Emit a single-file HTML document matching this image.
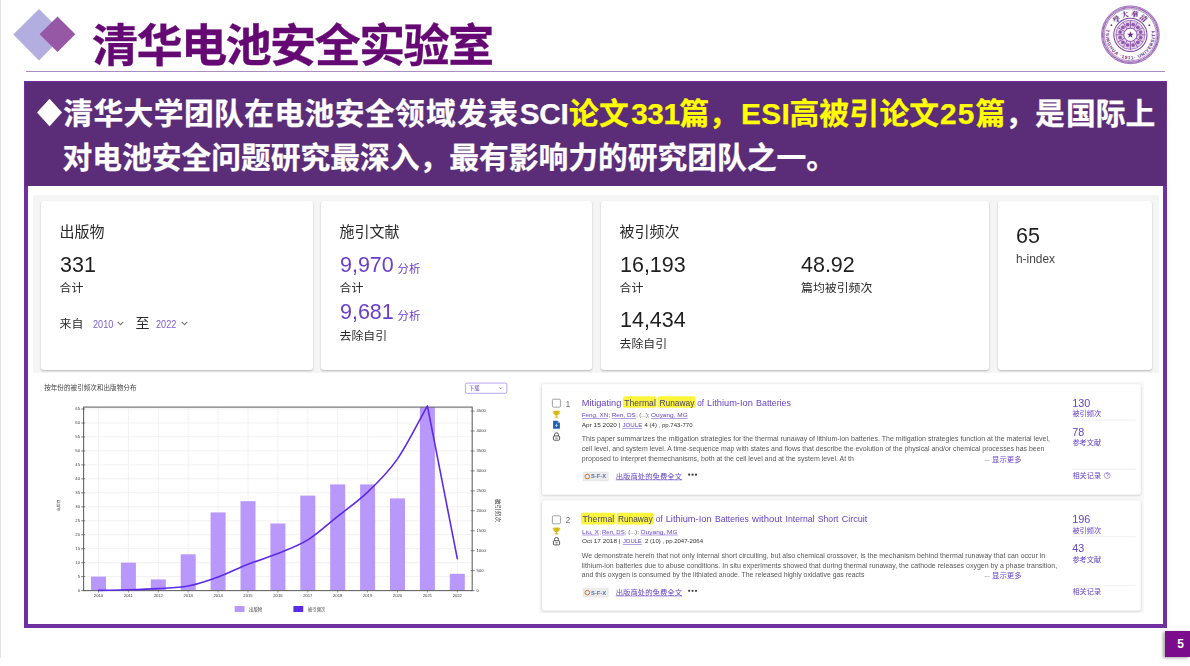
<!DOCTYPE html>
<html lang="zh">
<head>
<meta charset="utf-8">
<title>清华电池安全实验室</title>
<style>
*{box-sizing:border-box;margin:0;padding:0}
html,body{width:1190px;height:666px;overflow:hidden;background:#fff}
body{position:relative;font-family:"Liberation Sans","Noto Sans CJK SC",sans-serif;color:#222}
.abs{position:absolute;white-space:nowrap}
#edge{left:0;top:0;width:1.4px;height:657.6px;background:#e2e2e2}
#title{left:91.6px;top:14.5px;font-size:44.9px;font-weight:700;color:#660874;line-height:64px;letter-spacing:-1.7px;-webkit-text-stroke:0.3px #660874;transform:scaleX(1.03);transform-origin:0 0}
#rule{left:26px;top:70.5px;width:1139px;height:1.2px;background:#a98cc0}
#frame{left:24px;top:81px;width:1143px;height:547px;border:4px solid #7030a0;background:#fff}
#banner{left:25.3px;top:82.4px;width:1140.4px;height:103.6px;background:#5b2d78}
.bl{left:38px;font-size:29.75px;font-weight:700;color:#fff;line-height:44px;-webkit-text-stroke:0.25px}
.bl .y{color:#ffff00}
#bl1{top:92.2px;left:0}
#bl1 span{position:absolute;top:0}
#bl1 .dm{display:inline-block;transform-origin:0 50%;transform:scaleX(.91);font-size:27.6px;top:-0.7px}
#bl2{top:136px;left:62.6px}
#pageno{left:1165px;top:631.3px;width:25px;height:25.6px;padding-left:6px;background:#7b0c8c;color:#fff;font-weight:700;font-size:12px;line-height:26px;text-align:center;box-shadow:-2px 1px 3px rgba(0,0,0,.35)}
/* stats */
#stats{left:33px;top:195px;width:1126px;height:178px;background:#f5f5f5}
.card{position:absolute;background:#fff;border-radius:3px;box-shadow:0 1px 2px rgba(0,0,0,.26)}
.h{font-size:15px;color:#2a2a2a;line-height:18px}
.n{font-size:22.5px;color:#1f1f1f;line-height:24px;transform:scaleX(.955);transform-origin:0 0}
.s{font-size:11.9px;color:#2a2a2a;line-height:14px}
.p{color:#6b3fc8}
.h,.n,.s{filter:blur(.3px)}
</style>
</head>
<body>
<div id="edge" class="abs"></div>
<svg class="abs" style="left:12px;top:8px" width="66" height="54" viewBox="12 8 66 54">
<polygon points="13.3,34.5 39,9 64.5,34.5 39,60.5" fill="#b3aee0"/>
<polygon points="39.6,34.2 57.5,16.5 75.3,34.2 57.5,52" fill="#9657a5"/>
</svg>
<div id="title" class="abs">清华电池安全实验室</div>
<div id="rule" class="abs"></div>
<div id="frame" class="abs"></div>
<div id="banner" class="abs"></div>
<div id="bl1" class="abs bl"><span class="dm" style="left:37.2px;letter-spacing:0px">◆</span><span class="" style="left:63.3px;letter-spacing:0.41px">清华大学团队在电池安全领</span><span class="" style="left:426.1px;letter-spacing:1.3px">域发表</span><span class="" style="left:519.8px;letter-spacing:-0.3px">SCI</span><span class="y" style="left:568.9px;letter-spacing:0.3px">论文</span><span class="y" style="left:631.2px;letter-spacing:-0.43px">331</span><span class="y" style="left:679.5px;letter-spacing:-0.5px">篇，</span><span class="y" style="left:741.1px;letter-spacing:0.4px">ESI</span><span class="y" style="left:789.5px;letter-spacing:0.1px">高被引</span><span class="y" style="left:879.6px;letter-spacing:0px">论文</span><span class="y" style="left:940.0px;letter-spacing:1.2px">25</span><span class="y" style="left:975.5px;letter-spacing:0px">篇</span><span class="" style="left:1005.3px;letter-spacing:0px">，是</span><span class="" style="left:1066.1px;letter-spacing:0px">国际上</span></div>
<div id="bl2" class="abs bl">对电池安全问题研究最深入，最有影响力的研究团队之一。</div>
<div id="pageno" class="abs">5</div>
<svg class="abs" style="left:1098px;top:2px" width="66" height="66" viewBox="1098 2 66 66" font-family="'Liberation Serif','Noto Serif CJK SC',serif">
<circle cx="1130.4" cy="34.8" r="28.9" fill="#fff" stroke="#8345a3" stroke-width="0.7"/>
<circle cx="1130.4" cy="34.8" r="27.5" fill="none" stroke="#8345a3" stroke-width="1.8" stroke-dasharray="0.8 0.35"/>
<circle cx="1130.4" cy="34.8" r="26" fill="none" stroke="#8345a3" stroke-width="0.6"/>
<circle cx="1130.4" cy="34.8" r="16.6" fill="none" stroke="#8345a3" stroke-width="1.1"/>
<circle cx="1130.4" cy="34.8" r="14.6" fill="#e2d1ec" stroke="#8345a3" stroke-width="0.6"/>
<line x1="1136.90" y1="34.80" x2="1145.00" y2="34.80" stroke="#8345a3" stroke-width="0.8"/>
<circle cx="1140.64" cy="37.54" r="1.9" fill="#8345a3" opacity="0.85"/>
<line x1="1136.03" y1="38.05" x2="1143.04" y2="42.10" stroke="#8345a3" stroke-width="0.8"/>
<circle cx="1137.90" cy="42.30" r="1.9" fill="#8345a3" opacity="0.85"/>
<line x1="1133.65" y1="40.43" x2="1137.70" y2="47.44" stroke="#8345a3" stroke-width="0.8"/>
<circle cx="1133.14" cy="45.04" r="1.9" fill="#8345a3" opacity="0.85"/>
<line x1="1130.40" y1="41.30" x2="1130.40" y2="49.40" stroke="#8345a3" stroke-width="0.8"/>
<circle cx="1127.66" cy="45.04" r="1.9" fill="#8345a3" opacity="0.85"/>
<line x1="1127.15" y1="40.43" x2="1123.10" y2="47.44" stroke="#8345a3" stroke-width="0.8"/>
<circle cx="1122.90" cy="42.30" r="1.9" fill="#8345a3" opacity="0.85"/>
<line x1="1124.77" y1="38.05" x2="1117.76" y2="42.10" stroke="#8345a3" stroke-width="0.8"/>
<circle cx="1120.16" cy="37.54" r="1.9" fill="#8345a3" opacity="0.85"/>
<line x1="1123.90" y1="34.80" x2="1115.80" y2="34.80" stroke="#8345a3" stroke-width="0.8"/>
<circle cx="1120.16" cy="32.06" r="1.9" fill="#8345a3" opacity="0.85"/>
<line x1="1124.77" y1="31.55" x2="1117.76" y2="27.50" stroke="#8345a3" stroke-width="0.8"/>
<circle cx="1122.90" cy="27.30" r="1.9" fill="#8345a3" opacity="0.85"/>
<line x1="1127.15" y1="29.17" x2="1123.10" y2="22.16" stroke="#8345a3" stroke-width="0.8"/>
<circle cx="1127.66" cy="24.56" r="1.9" fill="#8345a3" opacity="0.85"/>
<line x1="1130.40" y1="28.30" x2="1130.40" y2="20.20" stroke="#8345a3" stroke-width="0.8"/>
<circle cx="1133.14" cy="24.56" r="1.9" fill="#8345a3" opacity="0.85"/>
<line x1="1133.65" y1="29.17" x2="1137.70" y2="22.16" stroke="#8345a3" stroke-width="0.8"/>
<circle cx="1137.90" cy="27.30" r="1.9" fill="#8345a3" opacity="0.85"/>
<line x1="1136.03" y1="31.55" x2="1143.04" y2="27.50" stroke="#8345a3" stroke-width="0.8"/>
<circle cx="1140.64" cy="32.06" r="1.9" fill="#8345a3" opacity="0.85"/>
<circle cx="1130.4" cy="34.8" r="6.6" fill="#fff" stroke="#8345a3" stroke-width="0.9"/>
<polygon points="1130.40,31.20 1131.25,33.63 1133.82,33.69 1131.78,35.25 1132.52,37.71 1130.40,36.25 1128.28,37.71 1129.02,35.25 1126.98,33.69 1129.55,33.63" fill="#6a2a8c"/>
<defs><path id="lgTop" d="M1116.38 23.04 A18.3 18.3 0 0 1 1144.42 23.04"/>
<path id="lgBot" d="M1107.00 27.20 A24.6 24.6 0 1 0 1153.80 27.20"/></defs>
<text font-size="7.2" font-weight="900" fill="#6a2a8c" letter-spacing="1.2"><textPath href="#lgTop" startOffset="50%" text-anchor="middle">學大華清</textPath></text>
<text font-size="4.7" font-weight="700" fill="#6a2a8c" letter-spacing="0.75" font-family="'Liberation Sans',sans-serif"><textPath href="#lgBot" startOffset="50%" text-anchor="middle">TSINGHUA ·1911· UNIVERSITY</textPath></text>
<circle cx="1111.42" cy="25.13" r="0.9" fill="#6a2a8c"/>
<circle cx="1149.38" cy="25.13" r="0.9" fill="#6a2a8c"/>
</svg>

<div id="stats" class="abs">
<div class="card" style="left:8px;top:6px;width:271.5px;height:169px"></div>
<div class="card" style="left:287.5px;top:6px;width:271.5px;height:169px"></div>
<div class="card" style="left:568px;top:6px;width:387.5px;height:169px"></div>
<div class="card" style="left:964.5px;top:6px;width:154.5px;height:169px"></div>
</div>
<div class="abs h" style="left:59.5px;top:223px">出版物</div>
<div class="abs n" style="left:59.5px;top:252.5px">331</div>
<div class="abs s" style="left:59.5px;top:281px">合计</div>
<div class="abs s" style="left:59.5px;top:316.5px">来自</div>
<div class="abs s p" style="left:92.5px;top:316.6px;font-size:10.6px;color:#7a5ed0;transform:scaleX(.86);transform-origin:0 0">2010</div>
<svg class="abs" style="left:117.3px;top:321.2px" width="7" height="5" viewBox="0 0 7 5"><path d="M0.7 0.8 L3.5 3.6 L6.3 0.8" fill="none" stroke="#777" stroke-width="1.1"/></svg>
<div class="abs s" style="left:135.5px;top:315.5px;font-size:14px">至</div>
<div class="abs s p" style="left:156.3px;top:316.6px;font-size:10.6px;color:#7a5ed0;transform:scaleX(.86);transform-origin:0 0">2022</div>
<svg class="abs" style="left:181.3px;top:321.2px" width="7" height="5" viewBox="0 0 7 5"><path d="M0.7 0.8 L3.5 3.6 L6.3 0.8" fill="none" stroke="#777" stroke-width="1.1"/></svg>

<div class="abs h" style="left:339.5px;top:223px">施引文献</div>
<div class="abs n p" style="left:339.5px;top:252.5px">9,970</div>
<div class="abs s p" style="left:397.5px;top:261.5px;font-size:11.4px">分析</div>
<div class="abs s" style="left:339.5px;top:281px">合计</div>
<div class="abs n p" style="left:339.5px;top:300px">9,681</div>
<div class="abs s p" style="left:397.5px;top:309px;font-size:11.4px">分析</div>
<div class="abs s" style="left:339.5px;top:328.5px">去除自引</div>

<div class="abs h" style="left:619.5px;top:223px">被引频次</div>
<div class="abs n" style="left:619.5px;top:252.5px">16,193</div>
<div class="abs s" style="left:619.5px;top:281px">合计</div>
<div class="abs n" style="left:619.5px;top:308px">14,434</div>
<div class="abs s" style="left:619.5px;top:336.5px">去除自引</div>
<div class="abs n" style="left:801px;top:252.5px">48.92</div>
<div class="abs s" style="left:801px;top:281px">篇均被引频次</div>

<div class="abs n" style="left:1016px;top:224px">65</div>
<div class="abs s" style="left:1016px;top:251.5px;color:#444">h-index</div>

<svg class="abs" style="left:33px;top:376px;filter:blur(0.3px)" width="495" height="248" viewBox="33 376 495 248" font-family="'Liberation Sans','Noto Sans CJK SC',sans-serif">
<text x="44.2" y="390.3" font-size="6.6" fill="#444">按年份的被引频次和出版物分布</text>
<rect x="465.4" y="383.1" width="41.5" height="10.2" rx="1.5" fill="#fff" stroke="#8a6be0" stroke-width="0.6"/>
<text x="469" y="390.2" font-size="5.2" fill="#5e33bf">下载</text>
<path d="M499.3 387.5 l1.3 1.3 l1.3 -1.3" fill="none" stroke="#5e33bf" stroke-width="0.5"/>
<line x1="98.5" y1="407.1" x2="98.5" y2="590.6" stroke="#d6d6d6" stroke-width="0.6" stroke-dasharray="1 0.8"/>
<line x1="128.4" y1="407.1" x2="128.4" y2="590.6" stroke="#d6d6d6" stroke-width="0.6" stroke-dasharray="1 0.8"/>
<line x1="158.3" y1="407.1" x2="158.3" y2="590.6" stroke="#d6d6d6" stroke-width="0.6" stroke-dasharray="1 0.8"/>
<line x1="188.2" y1="407.1" x2="188.2" y2="590.6" stroke="#d6d6d6" stroke-width="0.6" stroke-dasharray="1 0.8"/>
<line x1="218.1" y1="407.1" x2="218.1" y2="590.6" stroke="#d6d6d6" stroke-width="0.6" stroke-dasharray="1 0.8"/>
<line x1="248.0" y1="407.1" x2="248.0" y2="590.6" stroke="#d6d6d6" stroke-width="0.6" stroke-dasharray="1 0.8"/>
<line x1="277.9" y1="407.1" x2="277.9" y2="590.6" stroke="#d6d6d6" stroke-width="0.6" stroke-dasharray="1 0.8"/>
<line x1="307.8" y1="407.1" x2="307.8" y2="590.6" stroke="#d6d6d6" stroke-width="0.6" stroke-dasharray="1 0.8"/>
<line x1="337.7" y1="407.1" x2="337.7" y2="590.6" stroke="#d6d6d6" stroke-width="0.6" stroke-dasharray="1 0.8"/>
<line x1="367.6" y1="407.1" x2="367.6" y2="590.6" stroke="#d6d6d6" stroke-width="0.6" stroke-dasharray="1 0.8"/>
<line x1="397.5" y1="407.1" x2="397.5" y2="590.6" stroke="#d6d6d6" stroke-width="0.6" stroke-dasharray="1 0.8"/>
<line x1="427.4" y1="407.1" x2="427.4" y2="590.6" stroke="#d6d6d6" stroke-width="0.6" stroke-dasharray="1 0.8"/>
<line x1="457.3" y1="407.1" x2="457.3" y2="590.6" stroke="#d6d6d6" stroke-width="0.6" stroke-dasharray="1 0.8"/>
<line x1="83.6" y1="576.6" x2="472.2" y2="576.6" stroke="#e6e6e6" stroke-width="0.6"/>
<line x1="83.6" y1="562.7" x2="472.2" y2="562.7" stroke="#e6e6e6" stroke-width="0.6"/>
<line x1="83.6" y1="548.7" x2="472.2" y2="548.7" stroke="#e6e6e6" stroke-width="0.6"/>
<line x1="83.6" y1="534.7" x2="472.2" y2="534.7" stroke="#e6e6e6" stroke-width="0.6"/>
<line x1="83.6" y1="520.8" x2="472.2" y2="520.8" stroke="#e6e6e6" stroke-width="0.6"/>
<line x1="83.6" y1="506.8" x2="472.2" y2="506.8" stroke="#e6e6e6" stroke-width="0.6"/>
<line x1="83.6" y1="492.8" x2="472.2" y2="492.8" stroke="#e6e6e6" stroke-width="0.6"/>
<line x1="83.6" y1="478.8" x2="472.2" y2="478.8" stroke="#e6e6e6" stroke-width="0.6"/>
<line x1="83.6" y1="464.9" x2="472.2" y2="464.9" stroke="#e6e6e6" stroke-width="0.6"/>
<line x1="83.6" y1="450.9" x2="472.2" y2="450.9" stroke="#e6e6e6" stroke-width="0.6"/>
<line x1="83.6" y1="436.9" x2="472.2" y2="436.9" stroke="#e6e6e6" stroke-width="0.6"/>
<line x1="83.6" y1="423.0" x2="472.2" y2="423.0" stroke="#e6e6e6" stroke-width="0.6"/>
<line x1="83.6" y1="409.0" x2="472.2" y2="409.0" stroke="#e6e6e6" stroke-width="0.6"/>
<rect x="91.0" y="576.6" width="15.0" height="14.0" fill="#b998fb"/>
<rect x="120.9" y="562.7" width="15.0" height="27.9" fill="#b998fb"/>
<rect x="150.8" y="579.4" width="15.0" height="11.2" fill="#b998fb"/>
<rect x="180.7" y="554.3" width="15.0" height="36.3" fill="#b998fb"/>
<rect x="210.6" y="512.4" width="15.0" height="78.2" fill="#b998fb"/>
<rect x="240.5" y="501.2" width="15.0" height="89.4" fill="#b998fb"/>
<rect x="270.4" y="523.5" width="15.0" height="67.1" fill="#b998fb"/>
<rect x="300.3" y="495.6" width="15.0" height="95.0" fill="#b998fb"/>
<rect x="330.2" y="484.4" width="15.0" height="106.2" fill="#b998fb"/>
<rect x="360.1" y="484.4" width="15.0" height="106.2" fill="#b998fb"/>
<rect x="390.0" y="498.4" width="15.0" height="92.2" fill="#b998fb"/>
<rect x="419.9" y="407.1" width="15.0" height="183.5" fill="#b998fb"/>
<rect x="449.8" y="573.8" width="15.0" height="16.8" fill="#b998fb"/>
<rect x="83.6" y="407.1" width="388.6" height="183.5" fill="none" stroke="#666" stroke-width="1.1"/>
<line x1="81.1" y1="590.6" x2="85.1" y2="590.6" stroke="#555" stroke-width="0.7"/>
<text x="80.0" y="591.9" font-size="4.2" fill="#3a3a3a" text-anchor="end">0</text>
<line x1="81.1" y1="576.6" x2="85.1" y2="576.6" stroke="#555" stroke-width="0.7"/>
<text x="80.0" y="577.9" font-size="4.2" fill="#3a3a3a" text-anchor="end">5</text>
<line x1="81.1" y1="562.7" x2="85.1" y2="562.7" stroke="#555" stroke-width="0.7"/>
<text x="80.0" y="564.0" font-size="4.2" fill="#3a3a3a" text-anchor="end">10</text>
<line x1="81.1" y1="548.7" x2="85.1" y2="548.7" stroke="#555" stroke-width="0.7"/>
<text x="80.0" y="550.0" font-size="4.2" fill="#3a3a3a" text-anchor="end">15</text>
<line x1="81.1" y1="534.7" x2="85.1" y2="534.7" stroke="#555" stroke-width="0.7"/>
<text x="80.0" y="536.0" font-size="4.2" fill="#3a3a3a" text-anchor="end">20</text>
<line x1="81.1" y1="520.8" x2="85.1" y2="520.8" stroke="#555" stroke-width="0.7"/>
<text x="80.0" y="522.0" font-size="4.2" fill="#3a3a3a" text-anchor="end">25</text>
<line x1="81.1" y1="506.8" x2="85.1" y2="506.8" stroke="#555" stroke-width="0.7"/>
<text x="80.0" y="508.1" font-size="4.2" fill="#3a3a3a" text-anchor="end">30</text>
<line x1="81.1" y1="492.8" x2="85.1" y2="492.8" stroke="#555" stroke-width="0.7"/>
<text x="80.0" y="494.1" font-size="4.2" fill="#3a3a3a" text-anchor="end">35</text>
<line x1="81.1" y1="478.8" x2="85.1" y2="478.8" stroke="#555" stroke-width="0.7"/>
<text x="80.0" y="480.1" font-size="4.2" fill="#3a3a3a" text-anchor="end">40</text>
<line x1="81.1" y1="464.9" x2="85.1" y2="464.9" stroke="#555" stroke-width="0.7"/>
<text x="80.0" y="466.2" font-size="4.2" fill="#3a3a3a" text-anchor="end">45</text>
<line x1="81.1" y1="450.9" x2="85.1" y2="450.9" stroke="#555" stroke-width="0.7"/>
<text x="80.0" y="452.2" font-size="4.2" fill="#3a3a3a" text-anchor="end">50</text>
<line x1="81.1" y1="436.9" x2="85.1" y2="436.9" stroke="#555" stroke-width="0.7"/>
<text x="80.0" y="438.2" font-size="4.2" fill="#3a3a3a" text-anchor="end">55</text>
<line x1="81.1" y1="423.0" x2="85.1" y2="423.0" stroke="#555" stroke-width="0.7"/>
<text x="80.0" y="424.3" font-size="4.2" fill="#3a3a3a" text-anchor="end">60</text>
<line x1="81.1" y1="409.0" x2="85.1" y2="409.0" stroke="#555" stroke-width="0.7"/>
<text x="80.0" y="410.3" font-size="4.2" fill="#3a3a3a" text-anchor="end">65</text>
<line x1="470.7" y1="590.6" x2="474.7" y2="590.6" stroke="#555" stroke-width="0.7"/>
<text x="476.5" y="591.9" font-size="4.2" fill="#3a3a3a">0</text>
<line x1="470.7" y1="570.6" x2="474.7" y2="570.6" stroke="#555" stroke-width="0.7"/>
<text x="476.5" y="571.9" font-size="4.2" fill="#3a3a3a">500</text>
<line x1="470.7" y1="550.7" x2="474.7" y2="550.7" stroke="#555" stroke-width="0.7"/>
<text x="476.5" y="552.0" font-size="4.2" fill="#3a3a3a">1000</text>
<line x1="470.7" y1="530.8" x2="474.7" y2="530.8" stroke="#555" stroke-width="0.7"/>
<text x="476.5" y="532.0" font-size="4.2" fill="#3a3a3a">1500</text>
<line x1="470.7" y1="510.8" x2="474.7" y2="510.8" stroke="#555" stroke-width="0.7"/>
<text x="476.5" y="512.1" font-size="4.2" fill="#3a3a3a">2000</text>
<line x1="470.7" y1="490.9" x2="474.7" y2="490.9" stroke="#555" stroke-width="0.7"/>
<text x="476.5" y="492.2" font-size="4.2" fill="#3a3a3a">2500</text>
<line x1="470.7" y1="470.9" x2="474.7" y2="470.9" stroke="#555" stroke-width="0.7"/>
<text x="476.5" y="472.2" font-size="4.2" fill="#3a3a3a">3000</text>
<line x1="470.7" y1="451.0" x2="474.7" y2="451.0" stroke="#555" stroke-width="0.7"/>
<text x="476.5" y="452.3" font-size="4.2" fill="#3a3a3a">3500</text>
<line x1="470.7" y1="431.0" x2="474.7" y2="431.0" stroke="#555" stroke-width="0.7"/>
<text x="476.5" y="432.3" font-size="4.2" fill="#3a3a3a">4000</text>
<line x1="470.7" y1="411.1" x2="474.7" y2="411.1" stroke="#555" stroke-width="0.7"/>
<text x="476.5" y="412.4" font-size="4.2" fill="#3a3a3a">4500</text>
<line x1="98.5" y1="590.6" x2="98.5" y2="592.6" stroke="#555" stroke-width="0.6"/>
<text x="98.5" y="597.2" font-size="4.2" fill="#3a3a3a" text-anchor="middle">2010</text>
<line x1="128.4" y1="590.6" x2="128.4" y2="592.6" stroke="#555" stroke-width="0.6"/>
<text x="128.4" y="597.2" font-size="4.2" fill="#3a3a3a" text-anchor="middle">2011</text>
<line x1="158.3" y1="590.6" x2="158.3" y2="592.6" stroke="#555" stroke-width="0.6"/>
<text x="158.3" y="597.2" font-size="4.2" fill="#3a3a3a" text-anchor="middle">2012</text>
<line x1="188.2" y1="590.6" x2="188.2" y2="592.6" stroke="#555" stroke-width="0.6"/>
<text x="188.2" y="597.2" font-size="4.2" fill="#3a3a3a" text-anchor="middle">2013</text>
<line x1="218.1" y1="590.6" x2="218.1" y2="592.6" stroke="#555" stroke-width="0.6"/>
<text x="218.1" y="597.2" font-size="4.2" fill="#3a3a3a" text-anchor="middle">2014</text>
<line x1="248.0" y1="590.6" x2="248.0" y2="592.6" stroke="#555" stroke-width="0.6"/>
<text x="248.0" y="597.2" font-size="4.2" fill="#3a3a3a" text-anchor="middle">2015</text>
<line x1="277.9" y1="590.6" x2="277.9" y2="592.6" stroke="#555" stroke-width="0.6"/>
<text x="277.9" y="597.2" font-size="4.2" fill="#3a3a3a" text-anchor="middle">2016</text>
<line x1="307.8" y1="590.6" x2="307.8" y2="592.6" stroke="#555" stroke-width="0.6"/>
<text x="307.8" y="597.2" font-size="4.2" fill="#3a3a3a" text-anchor="middle">2017</text>
<line x1="337.7" y1="590.6" x2="337.7" y2="592.6" stroke="#555" stroke-width="0.6"/>
<text x="337.7" y="597.2" font-size="4.2" fill="#3a3a3a" text-anchor="middle">2018</text>
<line x1="367.6" y1="590.6" x2="367.6" y2="592.6" stroke="#555" stroke-width="0.6"/>
<text x="367.6" y="597.2" font-size="4.2" fill="#3a3a3a" text-anchor="middle">2019</text>
<line x1="397.5" y1="590.6" x2="397.5" y2="592.6" stroke="#555" stroke-width="0.6"/>
<text x="397.5" y="597.2" font-size="4.2" fill="#3a3a3a" text-anchor="middle">2020</text>
<line x1="427.4" y1="590.6" x2="427.4" y2="592.6" stroke="#555" stroke-width="0.6"/>
<text x="427.4" y="597.2" font-size="4.2" fill="#3a3a3a" text-anchor="middle">2021</text>
<line x1="457.3" y1="590.6" x2="457.3" y2="592.6" stroke="#555" stroke-width="0.6"/>
<text x="457.3" y="597.2" font-size="4.2" fill="#3a3a3a" text-anchor="middle">2022</text>
<path d="M98.5 590.4 C108.5 590.2 118.4 590.1 128.4 589.8 C138.4 589.5 148.3 589.2 158.3 588.6 C168.3 588.0 178.2 587.9 188.2 586.0 C198.2 584.1 208.1 580.7 218.1 577.0 C228.1 573.4 238.0 568.2 248.0 564.3 C258.0 560.3 267.9 557.5 277.9 553.5 C287.9 549.4 297.8 546.1 307.8 539.9 C317.8 533.7 327.7 524.3 337.7 516.4 C347.7 508.4 357.6 501.8 367.6 492.2 C377.6 482.7 387.5 473.3 397.5 458.9 C407.5 444.5 417.4 423.6 427.4 405.9 L457.3 558.7" fill="none" stroke="#5b2be8" stroke-width="1.6" stroke-linejoin="round" stroke-linecap="round"/>
<text transform="translate(59.8 505.5) rotate(-90)" font-size="3.8" fill="#444" text-anchor="middle">出版物</text>
<text transform="translate(496.3 510.5) rotate(90)" font-size="5.9" fill="#444" text-anchor="middle">被引频次</text>
<rect x="234.7" y="606" width="9.8" height="6" fill="#b998fb"/>
<text x="249" y="610.6" font-size="4.4" fill="#444">出版物</text>
<rect x="293.4" y="606" width="9.8" height="6" fill="#5b2be8"/>
<text x="307.9" y="610.6" font-size="4.4" fill="#444">被引频次</text>
</svg>

<svg class="abs" style="left:536px;top:378px;filter:blur(0.35px)" width="612" height="240" viewBox="536 378 612 240" font-family="'Liberation Sans','Noto Sans CJK SC',sans-serif">
<defs><filter id="sh" x="-2%" y="-5%" width="104%" height="112%"><feDropShadow dx="0" dy="0.7" stdDeviation="0.8" flood-color="#000" flood-opacity="0.22"/></filter></defs>
<rect x="539" y="382" width="605" height="230.8" fill="#f8f8f8"/>
<rect x="542.1" y="384.3" width="598.6" height="110.2" rx="2" fill="#fff" filter="url(#sh)"/>
<rect x="552.4" y="399.2" width="8" height="8" rx="1" fill="#fff" stroke="#8a8a8a" stroke-width="0.8"/>
<text x="565.4" y="406.5" font-size="8.6" fill="#777">1</text>
<rect x="622.9" y="396.2" width="33.7" height="11.6" rx="1.6" fill="#fbf63c"/>
<rect x="658.1" y="396.2" width="37.5" height="11.6" rx="1.6" fill="#fbf63c"/>
<text x="581.8" y="405.5" font-size="8.7" fill="#6443c6" textLength="39.6" lengthAdjust="spacingAndGlyphs">Mitigating</text>
<text x="624.3" y="405.5" font-size="8.7" fill="#4a4070" textLength="31.5" lengthAdjust="spacingAndGlyphs">Thermal</text>
<text x="659.5" y="405.5" font-size="8.7" fill="#4a4070" textLength="34.9" lengthAdjust="spacingAndGlyphs">Runaway</text>
<text x="697.3" y="405.5" font-size="8.7" fill="#6443c6" textLength="6.8" lengthAdjust="spacingAndGlyphs">of</text>
<text x="707.0" y="405.5" font-size="8.7" fill="#6443c6" textLength="45.8" lengthAdjust="spacingAndGlyphs">Lithium-Ion</text>
<text x="756.1" y="405.5" font-size="8.7" fill="#6443c6" textLength="34.8" lengthAdjust="spacingAndGlyphs">Batteries</text>
<text x="581.8" y="417.0" font-size="5.9" fill="#6443c6" textLength="26.4" lengthAdjust="spacingAndGlyphs">Feng, XN</text>
<line x1="581.8" y1="418.5" x2="608.2" y2="418.5" stroke="#6443c6" stroke-width="0.5"/>
<text x="608.4" y="417.0" font-size="5.9" fill="#4a4a4a" textLength="2.0" lengthAdjust="spacingAndGlyphs">;</text>
<text x="611.7" y="417.0" font-size="5.9" fill="#6443c6" textLength="24.2" lengthAdjust="spacingAndGlyphs">Ren, DS</text>
<line x1="611.7" y1="418.5" x2="635.9" y2="418.5" stroke="#6443c6" stroke-width="0.5"/>
<text x="636.2" y="417.0" font-size="5.9" fill="#4a4a4a" textLength="13.2" lengthAdjust="spacingAndGlyphs">; (...);</text>
<text x="651.0" y="417.0" font-size="5.9" fill="#6443c6" textLength="36.7" lengthAdjust="spacingAndGlyphs">Ouyang, MG</text>
<line x1="651.0" y1="418.5" x2="687.7" y2="418.5" stroke="#6443c6" stroke-width="0.5"/>
<text x="581.8" y="426.9" font-size="6.2" fill="#333" textLength="38.6" lengthAdjust="spacingAndGlyphs">Apr 15 2020 |</text>
<text x="622.4" y="426.9" font-size="6.2" fill="#6443c6" textLength="19.9" lengthAdjust="spacingAndGlyphs">JOULE</text>
<line x1="622.4" y1="428.4" x2="642.3" y2="428.4" stroke="#6443c6" stroke-width="0.5"/>
<text x="644.6" y="426.9" font-size="6.2" fill="#333" textLength="47.9" lengthAdjust="spacingAndGlyphs">4 (4) , pp.743-770</text>
<text x="581.8" y="441.1" font-size="6.9" fill="#585858" textLength="468.2" lengthAdjust="spacingAndGlyphs">This paper summarizes the mitigation strategies for the thermal runaway of lithium-ion batteries. The mitigation strategies function at the material level,</text>
<text x="581.8" y="451.3" font-size="6.9" fill="#585858" textLength="462.6" lengthAdjust="spacingAndGlyphs">cell level, and system level. A time-sequence map with states and flows that describe the evolution of the physical and/or chemical processes has been</text>
<text x="581.8" y="461.4" font-size="6.9" fill="#585858" textLength="272.1" lengthAdjust="spacingAndGlyphs">proposed to interpret themechanisms, both at the cell level and at the system level. At th</text>
<text x="984.2" y="461.4" font-size="6.9" fill="#666" textLength="5.8" lengthAdjust="spacingAndGlyphs">...</text>
<text x="992.0" y="461.7" font-size="7.4" fill="#6443c6" textLength="29.6" lengthAdjust="spacingAndGlyphs">显示更多</text>
<rect x="583.1" y="472.1" width="25.2" height="8.9" rx="0.8" fill="#ececec" stroke="#dcdcdc" stroke-width="0.4"/>
<circle cx="587.3000000000001" cy="476.55" r="2.3" fill="none" stroke="#c47a35" stroke-width="1"/>
<text x="591.1" y="478.40000000000003" font-size="5" font-weight="700" fill="#5577a8" textLength="15" lengthAdjust="spacingAndGlyphs">S·F·X</text>
<text x="615.7" y="479.0" font-size="7.4" fill="#6443c6" textLength="66.4" lengthAdjust="spacingAndGlyphs">出版商处的免费全文</text>
<line x1="615.7" y1="479.9" x2="682.1" y2="479.9" stroke="#6443c6" stroke-width="0.5"/>
<circle cx="689.2" cy="474.7" r="1.15" fill="#444"/>
<circle cx="692.6" cy="474.7" r="1.15" fill="#444"/>
<circle cx="696.0" cy="474.7" r="1.15" fill="#444"/>
<g transform="translate(552.5 410.7)" fill="#d9b611"><path d="M1.6 0h4.8v2.6a2.4 2.4 0 0 1-4.8 0z"/><path d="M0.2 0.6h1.6v0.7h-0.9c0 .9.4 1.4 1.1 1.6l-.2.7c-1.1-.3-1.6-1.2-1.6-3zM7.8 0.6h-1.6v0.7h.9c0 .9-.4 1.4-1.1 1.6l.2.7c1.1-.3 1.6-1.2 1.6-3z"/><rect x="3.5" y="4.6" width="1" height="1.4"/><rect x="2.2" y="5.9" width="3.6" height="1.1"/></g>
<g transform="translate(553.1 420.7)"><path d="M0 0h4.6l2.2 2.2v5.8h-6.8z" fill="#1f5fae"/><path d="M4.6 0v2.2h2.2z" fill="#9dbde2"/><path d="M3.4 3v2.6M2.2 4.6l1.2 1.2 1.2-1.2" stroke="#fff" stroke-width="0.7" fill="none"/></g>
<g transform="translate(552.9 432.8)" fill="none" stroke="#444" stroke-width="0.9"><path d="M1.6 3.2v-1.2a2 2 0 0 1 4 0v1.2"/><rect x="0.5" y="3.2" width="6.2" height="4.2" rx="1"/><path d="M2.4 5.3h2.4" stroke-width="0.8"/></g>
<text x="1072.2" y="406.8" font-size="11.6" fill="#6443c6" textLength="18.1" lengthAdjust="spacingAndGlyphs">130</text>
<text x="1072.4" y="416.3" font-size="7.2" fill="#6443c6" textLength="28.7" lengthAdjust="spacingAndGlyphs">被引频次</text>
<line x1="1072.0" y1="420.1" x2="1135.6" y2="420.1" stroke="#e6e6e6" stroke-width="0.6"/>
<text x="1072.2" y="435.7" font-size="11.6" fill="#6443c6" textLength="12.0" lengthAdjust="spacingAndGlyphs">78</text>
<text x="1072.4" y="445.4" font-size="7.2" fill="#6443c6" textLength="28.7" lengthAdjust="spacingAndGlyphs">参考文献</text>
<line x1="1072.0" y1="469.2" x2="1135.6" y2="469.2" stroke="#e6e6e6" stroke-width="0.6"/>
<text x="1072.4" y="478.1" font-size="7.2" fill="#6443c6" textLength="28.7" lengthAdjust="spacingAndGlyphs">相关记录</text>
<circle cx="1107.2" cy="475.5" r="3" fill="none" stroke="#6443c6" stroke-width="0.5"/>
<text x="1105.9" y="477.3" font-size="4.8" fill="#6443c6">?</text>
<rect x="542.1" y="500.6" width="598.6" height="109.8" rx="2" fill="#fff" filter="url(#sh)"/>
<rect x="552.4" y="515.8" width="8" height="8" rx="1" fill="#fff" stroke="#8a8a8a" stroke-width="0.8"/>
<text x="565.4" y="523.1" font-size="8.6" fill="#777">2</text>
<rect x="581.0" y="512.8" width="34.3" height="11.6" rx="1.6" fill="#fbf63c"/>
<rect x="616.6" y="512.8" width="37.3" height="11.6" rx="1.6" fill="#fbf63c"/>
<text x="582.6" y="522.1" font-size="8.7" fill="#4a4070" textLength="31.5" lengthAdjust="spacingAndGlyphs">Thermal</text>
<text x="617.9" y="522.1" font-size="8.7" fill="#4a4070" textLength="34.7" lengthAdjust="spacingAndGlyphs">Runaway</text>
<text x="655.7" y="522.1" font-size="8.7" fill="#6443c6" textLength="7.0" lengthAdjust="spacingAndGlyphs">of</text>
<text x="665.7" y="522.1" font-size="8.7" fill="#6443c6" textLength="45.9" lengthAdjust="spacingAndGlyphs">Lithium-Ion</text>
<text x="714.9" y="522.1" font-size="8.7" fill="#6443c6" textLength="34.0" lengthAdjust="spacingAndGlyphs">Batteries</text>
<text x="752.0" y="522.1" font-size="8.7" fill="#6443c6" textLength="30.2" lengthAdjust="spacingAndGlyphs">without</text>
<text x="785.5" y="522.1" font-size="8.7" fill="#6443c6" textLength="29.0" lengthAdjust="spacingAndGlyphs">Internal</text>
<text x="817.8" y="522.1" font-size="8.7" fill="#6443c6" textLength="20.6" lengthAdjust="spacingAndGlyphs">Short</text>
<text x="841.7" y="522.1" font-size="8.7" fill="#6443c6" textLength="25.7" lengthAdjust="spacingAndGlyphs">Circuit</text>
<text x="582.0" y="533.5" font-size="5.9" fill="#6443c6" textLength="17.0" lengthAdjust="spacingAndGlyphs">Liu, X</text>
<line x1="582.0" y1="535.0" x2="599.0" y2="535.0" stroke="#6443c6" stroke-width="0.5"/>
<text x="599.2" y="533.5" font-size="5.9" fill="#4a4a4a" textLength="1.8" lengthAdjust="spacingAndGlyphs">;</text>
<text x="602.0" y="533.5" font-size="5.9" fill="#6443c6" textLength="22.7" lengthAdjust="spacingAndGlyphs">Ren, DS</text>
<line x1="602.0" y1="535.0" x2="624.7" y2="535.0" stroke="#6443c6" stroke-width="0.5"/>
<text x="625.0" y="533.5" font-size="5.9" fill="#4a4a4a" textLength="13.8" lengthAdjust="spacingAndGlyphs">; (...);</text>
<text x="640.5" y="533.5" font-size="5.9" fill="#6443c6" textLength="37.1" lengthAdjust="spacingAndGlyphs">Ouyang, MG</text>
<line x1="640.5" y1="535.0" x2="677.6" y2="535.0" stroke="#6443c6" stroke-width="0.5"/>
<text x="582.0" y="543.0" font-size="6.2" fill="#333" textLength="38.4" lengthAdjust="spacingAndGlyphs">Oct 17 2018 |</text>
<text x="622.9" y="543.0" font-size="6.2" fill="#6443c6" textLength="18.9" lengthAdjust="spacingAndGlyphs">JOULE</text>
<line x1="622.9" y1="544.5" x2="641.8" y2="544.5" stroke="#6443c6" stroke-width="0.5"/>
<text x="645.0" y="543.0" font-size="6.2" fill="#333" textLength="58.0" lengthAdjust="spacingAndGlyphs">2 (10) , pp.2047-2064</text>
<text x="581.8" y="557.9" font-size="6.9" fill="#585858" textLength="463.4" lengthAdjust="spacingAndGlyphs">We demonstrate herein that not only internal short circuiting, but also chemical crossover, is the mechanism behind thermal runaway that can occur in</text>
<text x="581.8" y="567.8" font-size="6.9" fill="#585858" textLength="475.3" lengthAdjust="spacingAndGlyphs">lithium-ion batteries due to abuse conditions. In situ experiments showed that during thermal runaway, the cathode releases oxygen by a phase transition,</text>
<text x="581.8" y="577.2" font-size="6.9" fill="#585858" textLength="282.6" lengthAdjust="spacingAndGlyphs">and this oxygen is consumed by the lithiated anode. The released highly oxidative gas reacts</text>
<text x="984.2" y="577.2" font-size="6.9" fill="#666" textLength="5.8" lengthAdjust="spacingAndGlyphs">...</text>
<text x="992.0" y="577.5" font-size="7.4" fill="#6443c6" textLength="29.6" lengthAdjust="spacingAndGlyphs">显示更多</text>
<rect x="583.1" y="588.2" width="25.2" height="8.9" rx="0.8" fill="#ececec" stroke="#dcdcdc" stroke-width="0.4"/>
<circle cx="587.3000000000001" cy="592.6500000000001" r="2.3" fill="none" stroke="#c47a35" stroke-width="1"/>
<text x="591.1" y="594.5" font-size="5" font-weight="700" fill="#5577a8" textLength="15" lengthAdjust="spacingAndGlyphs">S·F·X</text>
<text x="615.7" y="595.1" font-size="7.4" fill="#6443c6" textLength="66.4" lengthAdjust="spacingAndGlyphs">出版商处的免费全文</text>
<line x1="615.7" y1="596.0" x2="682.1" y2="596.0" stroke="#6443c6" stroke-width="0.5"/>
<circle cx="689.2" cy="590.8" r="1.15" fill="#444"/>
<circle cx="692.6" cy="590.8" r="1.15" fill="#444"/>
<circle cx="696.0" cy="590.8" r="1.15" fill="#444"/>
<g transform="translate(552.5 527.4)" fill="#d9b611"><path d="M1.6 0h4.8v2.6a2.4 2.4 0 0 1-4.8 0z"/><path d="M0.2 0.6h1.6v0.7h-0.9c0 .9.4 1.4 1.1 1.6l-.2.7c-1.1-.3-1.6-1.2-1.6-3zM7.8 0.6h-1.6v0.7h.9c0 .9-.4 1.4-1.1 1.6l.2.7c1.1-.3 1.6-1.2 1.6-3z"/><rect x="3.5" y="4.6" width="1" height="1.4"/><rect x="2.2" y="5.9" width="3.6" height="1.1"/></g>
<g transform="translate(552.9 537.5)" fill="none" stroke="#444" stroke-width="0.9"><path d="M1.6 3.2v-1.2a2 2 0 0 1 4 0v1.2"/><rect x="0.5" y="3.2" width="6.2" height="4.2" rx="1"/><path d="M2.4 5.3h2.4" stroke-width="0.8"/></g>
<text x="1072.2" y="522.7" font-size="11.6" fill="#6443c6" textLength="18.1" lengthAdjust="spacingAndGlyphs">196</text>
<text x="1072.4" y="532.7" font-size="7.2" fill="#6443c6" textLength="28.7" lengthAdjust="spacingAndGlyphs">被引频次</text>
<line x1="1072.0" y1="536.6" x2="1135.6" y2="536.6" stroke="#e6e6e6" stroke-width="0.6"/>
<text x="1072.2" y="552.1" font-size="11.6" fill="#6443c6" textLength="12.0" lengthAdjust="spacingAndGlyphs">43</text>
<text x="1072.4" y="561.8" font-size="7.2" fill="#6443c6" textLength="28.7" lengthAdjust="spacingAndGlyphs">参考文献</text>
<line x1="1072.0" y1="585.7" x2="1135.6" y2="585.7" stroke="#e6e6e6" stroke-width="0.6"/>
<text x="1072.4" y="593.7" font-size="7.2" fill="#6443c6" textLength="28.7" lengthAdjust="spacingAndGlyphs">相关记录</text>
</svg>

</body>
</html>
